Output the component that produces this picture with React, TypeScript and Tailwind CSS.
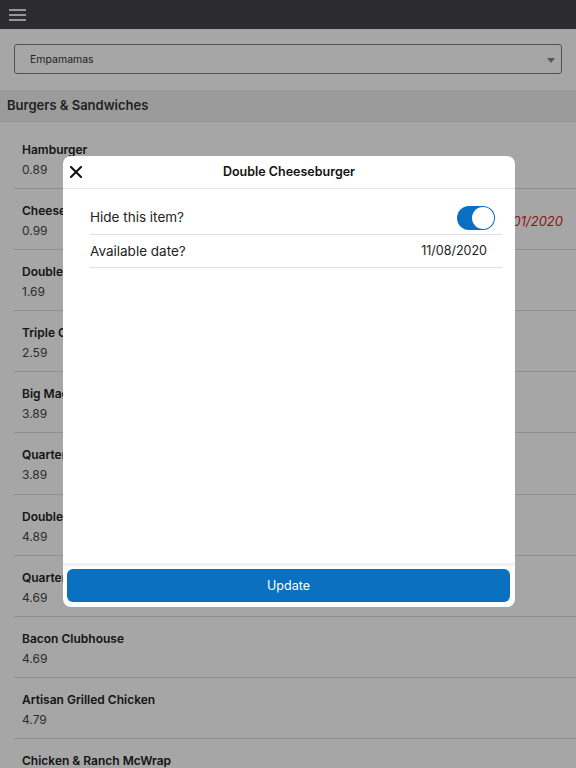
import React from "react";

const items: { name: string; price: string; date?: string }[] = [
  { name: "Hamburger", price: "0.89" },
  { name: "Cheeseburger", price: "0.99", date: "11/01/2020" },
  { name: "Double Cheeseburger", price: "1.69" },
  { name: "Triple Cheeseburger", price: "2.59" },
  { name: "Big Mac", price: "3.89" },
  { name: "Quarter Pounder with Cheese", price: "3.89" },
  { name: "Double Quarter Pounder with Cheese", price: "4.89" },
  { name: "Quarter Pounder with Cheese Deluxe", price: "4.69" },
  { name: "Bacon Clubhouse", price: "4.69" },
  { name: "Artisan Grilled Chicken", price: "4.79" },
  { name: "Chicken & Ranch McWrap", price: "3.99" },
];

export default function App() {
  return (
    <div
      className="relative w-[576px] h-[768px] overflow-hidden bg-white"
      style={{ fontFamily: "Inter, 'Noto Sans', 'Liberation Sans', sans-serif" }}
    >
      {/* Top bar */}
      <div className="h-[29px] bg-[#444447] flex items-center pl-[9px]">
        <div className="flex flex-col gap-[3px]">
          <div className="w-[17px] h-[2px] bg-[#e8e8e8]" />
          <div className="w-[17px] h-[2px] bg-[#e8e8e8]" />
          <div className="w-[17px] h-[2px] bg-[#e8e8e8]" />
        </div>
      </div>

      {/* Select */}
      <div className="px-[14px] pt-[15px] pb-[16px]">
        <div className="h-[30px] border border-[#7d7d7d] rounded-[3px] flex items-center justify-between pl-[15px] pr-[6px] pt-[2px]">
          <span className="text-[10.5px] text-[#333]">Empamamas</span>
          <svg width="8" height="5" viewBox="0 0 8 5">
            <path d="M0 0 L8 0 L4 5 Z" fill="#888" />
          </svg>
        </div>
      </div>

      {/* Section header */}
      <div className="h-[32px] bg-[#efefef] border-b border-[#e0e0e0] flex items-center pl-[7px] pt-[1px]">
        <span className="text-[13px] font-semibold text-[#333]">Burgers &amp; Sandwiches</span>
      </div>

      {/* Items */}
      <div className="pt-[6px] pl-[14px]">
        {items.map((it, i) => (
          <div
            key={i}
            className="h-[61.1px] border-b border-[#dcdcdc] pl-[8px] pr-[13px] pt-[12px] flex justify-between"
          >
            <div className="flex flex-col">
              <span className="text-[12px] font-semibold text-[#222] leading-[20px]">{it.name}</span>
              <span className="text-[12px] text-[#444] leading-[20px]">{it.price}</span>
            </div>
            {it.date && (
              <span className="text-[13px] italic text-[#e02020] leading-[20px] mt-[10px]">{it.date}</span>
            )}
          </div>
        ))}
      </div>

      {/* Overlay */}
      <div className="absolute inset-0 bg-black/[0.35]" />

      {/* Modal */}
      <div className="absolute left-[63px] top-[156px] w-[452px] h-[451px] bg-white rounded-[8px] flex flex-col overflow-hidden">
        <div className="relative h-[33px] pt-[1px] border-b border-[#e6e6e6] flex items-center justify-center shrink-0">
          <svg className="absolute left-[7px] top-[10px]" width="12" height="12" viewBox="0 0 12 12">
            <path d="M1 1 L11 11 M11 1 L1 11" stroke="#111" strokeWidth="2" strokeLinecap="square" />
          </svg>
          <span className="text-[12.5px] font-semibold text-[#111]">Double Cheeseburger</span>
        </div>
        <div className="flex-1 pl-[27px] pr-[13px] pt-[12px]">
          <div className="h-[34px] border-b border-[#dedede] flex items-center justify-between pr-[7px]">
            <span className="text-[13.5px] text-[#222]">Hide this item?</span>
            <div className="w-[38px] h-[24px] rounded-full bg-[#0a6fc2] relative">
              <div className="absolute right-[1px] top-[1px] w-[22px] h-[22px] rounded-full bg-white" />
            </div>
          </div>
          <div className="h-[33px] border-b border-[#dedede] flex items-center justify-between pr-[15px]">
            <span className="text-[13.5px] text-[#222]">Available date?</span>
            <span className="text-[12.5px] text-[#222]">11/08/2020</span>
          </div>
        </div>
        <div className="border-t-[3px] border-[#f1f1f1] pt-[3px] pl-[4px] pr-[5px] pb-[5px] shrink-0">
          <div className="h-[33px] rounded-[6px] bg-[#0a70bf] flex items-center justify-center pt-[1px]">
            <span className="text-[12.5px] text-white">Update</span>
          </div>
        </div>
      </div>
    </div>
  );
}
